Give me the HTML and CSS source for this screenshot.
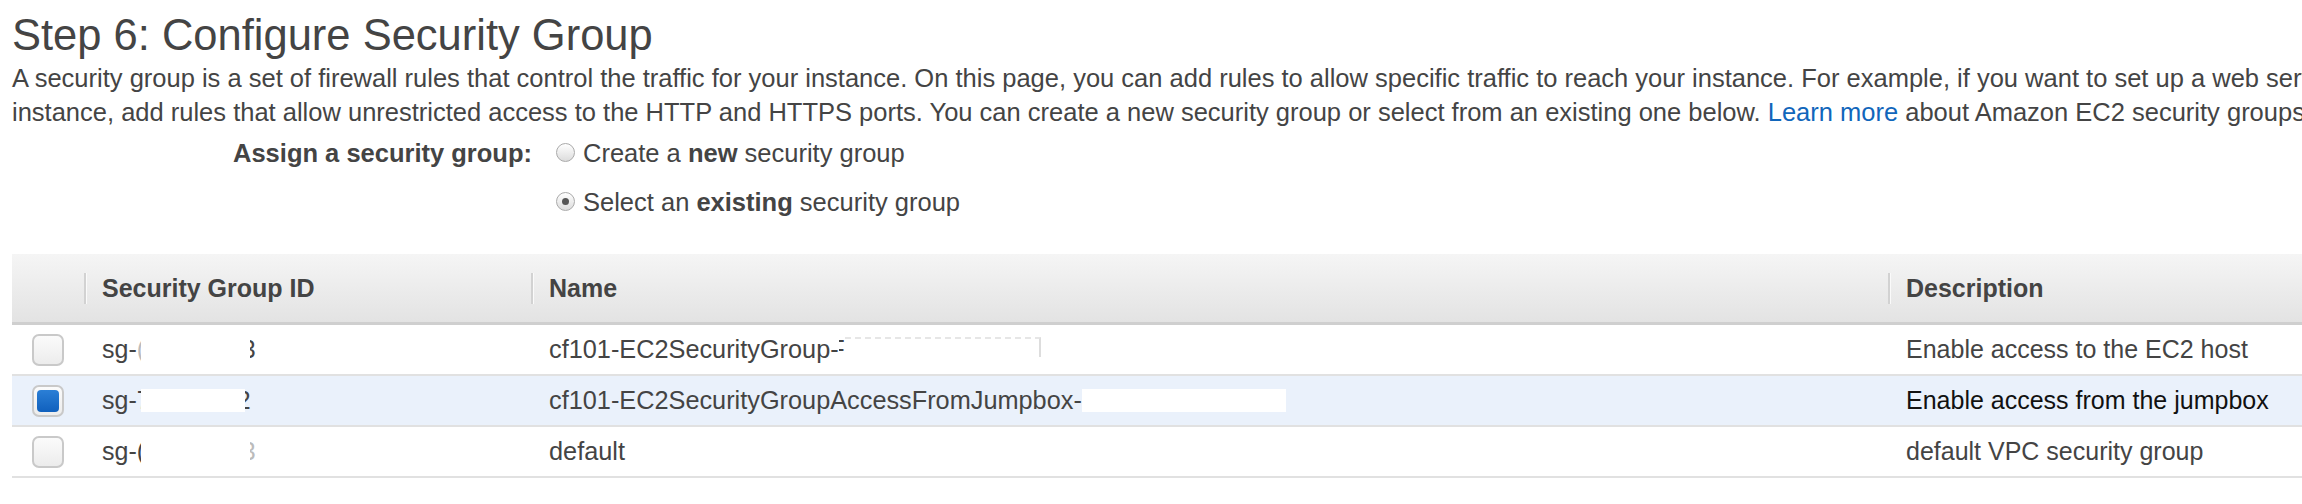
FILE: index.html
```html
<!DOCTYPE html>
<html>
<head>
<meta charset="utf-8">
<link rel="stylesheet" href="styles.css">
</head>
<body>
<div class="page">
  <h1 class="title">Step 6: Configure Security Group</h1>
  <p class="intro">A security group is a set of firewall rules that control the traffic for your instance. On this page, you can add rules to allow specific traffic to reach your instance. For example, if you want to set up a web server on your<br>instance, add rules that allow unrestricted access to the HTTP and HTTPS ports. You can create a new security group or select from an existing one below. <a class="link" href="#">Learn more</a> about Amazon EC2 security groups.</p>

  <div class="assign">
    <div class="assign-label">Assign a security group:</div>
    <div class="assign-options">
      <label class="opt"><span class="radio"></span>Create a <b>new</b> security group</label>
      <label class="opt"><span class="radio on"></span>Select an <b>existing</b> security group</label>
    </div>
  </div>

  <div class="table">
    <div class="row head">
      <div class="cell c0"></div>
      <div class="cell"><span class="sep"></span>Security Group ID</div>
      <div class="cell"><span class="sep"></span>Name</div>
      <div class="cell"><span class="sep"></span>Description</div>
    </div>
    <div class="row">
      <div class="cell c0"><span class="check"></span></div>
      <div class="cell">sg-<span class="frag lt">(</span><span class="blank w1"></span><span class="frag half">3</span></div>
      <div class="cell">cf101-EC2SecurityGroup-<span class="frag half">F</span><span class="ghost"></span></div>
      <div class="cell">Enable access to the EC2 host</div>
    </div>
    <div class="row sel">
      <div class="cell c0"><span class="check on"></span></div>
      <div class="cell">sg-<span class="frag">7</span><span class="blank w2"></span><span class="frag half">2</span></div>
      <div class="cell">cf101-EC2SecurityGroupAccessFromJumpbox-<span class="blank w3"></span></div>
      <div class="cell dark">Enable access from the jumpbox</div>
    </div>
    <div class="row">
      <div class="cell c0"><span class="check"></span></div>
      <div class="cell">sg-<span class="frag">(</span><span class="blank w1"></span><span class="frag half lt">3</span></div>
      <div class="cell">default</div>
      <div class="cell">default VPC security group</div>
    </div>
  </div>
</div>
</body>
</html>
```

FILE: styles.css
```css
html, body {
  margin: 0;
  padding: 0;
  background: #fff;
}
body {
  width: 2302px;
  height: 504px;
  overflow: hidden;
  font-family: "Liberation Sans", Arial, sans-serif;
  color: #444;
}
.page {
  padding: 10px 0 0 12px;
}
.title {
  margin: 0;
  font-size: 43.5px;
  font-weight: normal;
  line-height: 50px;
  color: #444;
  white-space: nowrap;
}
.intro {
  margin: 1px 0 0 0;
  font-size: 25.5px;
  line-height: 34px;
  white-space: nowrap;
}
.link {
  color: #1166bb;
  text-decoration: none;
}
.assign {
  display: flex;
  margin-top: 0;
  font-size: 25.5px;
  line-height: 49px;
}
.assign-label {
  width: 544px;
  text-align: right;
  font-weight: bold;
  padding-right: 24px;
  box-sizing: border-box;
}
.assign-options {
  display: flex;
  flex-direction: column;
}
.opt {
  display: flex;
  align-items: center;
  white-space: pre;
}
.opt b {
  font-weight: bold;
}
.radio {
  width: 19px;
  height: 19px;
  border-radius: 50%;
  border: 1px solid #aaa;
  background: linear-gradient(#ffffff, #dcdcdc);
  margin-right: 8px;
  margin-top: -3px;
  display: flex;
  align-items: center;
  justify-content: center;
  box-sizing: border-box;
}
.radio.on::after {
  content: "";
  width: 7px;
  height: 7px;
  border-radius: 50%;
  background: #555;
}
.table {
  margin-top: 27px;
  width: 2600px;
}
.row {
  display: grid;
  grid-template-columns: 72px 447px 1357px 724px;
  height: 49px;
  border-bottom: 2px solid #e1e1e1;
  font-size: 25px;
}
.row.head {
  height: 68px;
  background: linear-gradient(#f5f5f5, #e3e3e3);
  border-bottom: 3px solid #cfcfcf;
  font-weight: bold;
}
.row.sel {
  background: #eaf1fb;
}
.cell {
  display: flex;
  align-items: center;
  padding-left: 18px;
  white-space: nowrap;
}
.row:not(.head) .cell:nth-child(3) {
  font-size: 25.3px;
}
.head .cell {
  padding-left: 0;
}
.cell.c0 {
  padding-left: 20px;
}
.sep {
  display: inline-block;
  height: 31px;
  border-left: 2px solid #d2d2d2;
  border-right: 1px solid #fafafa;
  margin-right: 15px;
}
.cell.dark {
  color: #111;
}
.check {
  display: flex;
  width: 32px;
  height: 32px;
  box-sizing: border-box;
  border: 2px solid #c9c9c9;
  border-radius: 7px;
  background: linear-gradient(#fbfbfb, #ececec);
  align-items: center;
  justify-content: center;
}
.check.on::after {
  content: "";
  width: 22px;
  height: 22px;
  border-radius: 4px;
  background: linear-gradient(#2b7fd6, #1060bd);
}
.frag {
  display: inline-block;
  width: 4px;
  overflow: hidden;
}
.frag.half {
  direction: rtl;
  width: 6px;
}
.frag.lt {
  color: #bbb;
}
.blank {
  display: inline-block;
  height: 23px;
  background: #fff;
}
.w1 { width: 109px; }
.w2 { width: 104px; }
.w3 { width: 204px; }
.ghost {
  display: inline-block;
  width: 194px;
  height: 18px;
  margin-bottom: 6px;
  border-top: 2px dashed #e6e6e6;
  border-right: 2px solid #ddd;
}
```
